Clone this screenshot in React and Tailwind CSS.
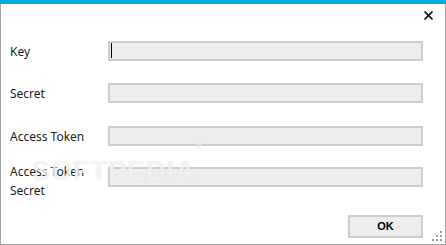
import React from 'react'

const fields = [
  { label: 'Key', gap: 'mt-0', caret: true },
  { label: 'Secret', gap: 'mt-[21px]' },
  { label: 'Access Token', gap: 'mt-[22px]' },
]

function Field({ label, gap, caret }) {
  return (
    <div className={`flex items-center ${gap}`}>
      <div className="w-[107px] pl-[9px] pt-[3px] leading-[18px]">{label}</div>
      <div className="w-[315px] h-[20px] bg-[#ededed] border-2 border-[#cccccc] flex items-center pl-[1px]">
        {caret && <div className="w-[1px] h-[15px] bg-black" />}
      </div>
    </div>
  )
}

function App() {
  return (
    <div
      className="w-[446px] h-[245px] bg-white flex flex-col relative overflow-hidden text-[12px] text-[#1b1b1b]"
      style={{ fontFamily: '"Noto Sans", "Open Sans", sans-serif' }}
    >
      <div className="h-[4px] bg-[#00acd9] shrink-0" />
      <div className="flex-1 flex flex-col border-l border-r border-b border-[#a3a3a3]">
        {/* close */}
        <div className="flex justify-end pt-[7px] pr-[12px]">
          <svg width="9" height="9" viewBox="0 0 9 9">
            <path d="M0.5 0.5 L8.5 8.5 M8.5 0.5 L0.5 8.5" stroke="#111" strokeWidth="1.6" />
          </svg>
        </div>

        <div className="flex flex-col pt-[20px]">
          {fields.map((f) => (
            <Field key={f.label} {...f} />
          ))}

          <div className="flex items-start mt-[21px]">
            <div className="w-[107px] pl-[9px] -mt-[5px] leading-[19px]">
              Access Token
              <br />
              Secret
            </div>
            <div className="w-[315px] h-[20px] bg-[#ededed] border-2 border-[#cccccc]" />
          </div>

          <div className="flex justify-start pl-[347px] mt-[15px]">
            <button
              className="w-[75px] h-[23px] bg-[#ededed] border-2 border-[#cccccc] text-[11px] font-bold text-black flex items-center justify-center"
              style={{ fontFamily: '"Liberation Sans", Arial, sans-serif' }}
            >
              OK
            </button>
          </div>
        </div>
      </div>

      {/* watermark */}
      <div
        className="absolute left-[32px] top-[151px] text-[27px] font-bold tracking-[1px] text-white/60 select-none pointer-events-none"
        style={{ fontFamily: '"Liberation Sans", Arial, sans-serif', textShadow: '0 0 1px rgba(200,200,200,0.5)' }}
      >
        SOFTPEDIA<sup className="text-[9px] align-top">®</sup>
      </div>

      {/* resize grip */}
      <svg className="absolute right-[4px] bottom-[4px]" width="10" height="10" viewBox="0 0 10 10">
        <rect x="8" y="0" width="2" height="2" fill="#9a9a9a" />
        <rect x="4" y="4" width="2" height="2" fill="#9a9a9a" />
        <rect x="8" y="4" width="2" height="2" fill="#9a9a9a" />
        <rect x="0" y="8" width="2" height="2" fill="#9a9a9a" />
        <rect x="4" y="8" width="2" height="2" fill="#9a9a9a" />
        <rect x="8" y="8" width="2" height="2" fill="#9a9a9a" />
      </svg>
    </div>
  )
}

export default App
